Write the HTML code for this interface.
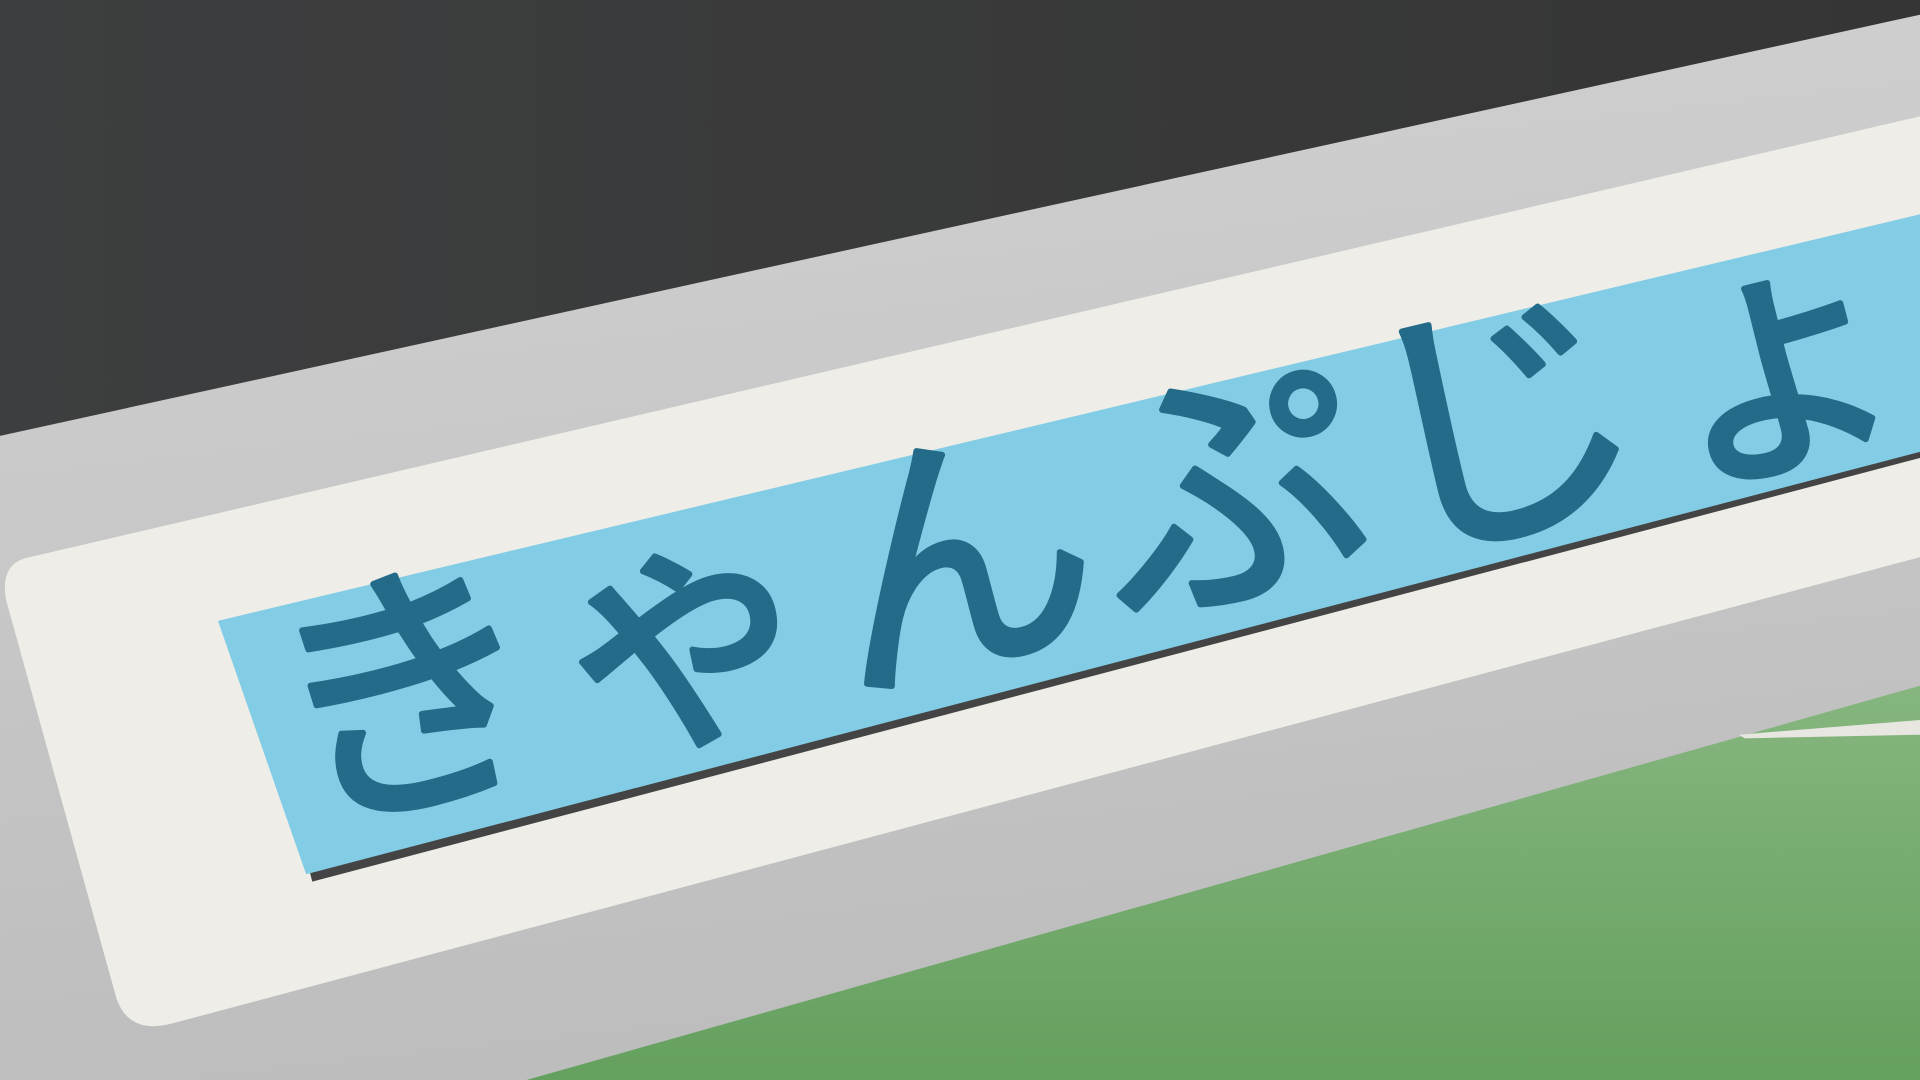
<!DOCTYPE html>
<html><head><meta charset="utf-8"><style>
html,body{margin:0;padding:0;width:1920px;height:1080px;overflow:hidden;background:#3a3a3a}
svg{display:block}
</style></head><body>
<svg width="1920" height="1080" viewBox="0 0 1568 882" preserveAspectRatio="none" xmlns="http://www.w3.org/2000/svg">
<defs>
<linearGradient id="dark" x1="0" y1="0" x2="1" y2="0"><stop offset="0" stop-color="#3d3e3f"/><stop offset="1" stop-color="#353535"/></linearGradient>
<linearGradient id="gr" x1="0" y1="0" x2="0" y2="1"><stop offset="0" stop-color="#86b67f"/><stop offset="1" stop-color="#64a05e"/></linearGradient>
<linearGradient id="bar" x1="0" y1="0" x2="0.2" y2="1"><stop offset="0" stop-color="#d2d2d2"/><stop offset="1" stop-color="#bdbdbd"/></linearGradient>
</defs>
<rect width="1568" height="882" fill="url(#dark)"/>
<polygon points="0,356 1568,12 1568,882 0,882" fill="url(#bar)"/>
<polygon points="430,882 1568,560 1568,882" fill="url(#gr)"/>
<path d="M1420,600 L1568,588 L1568,600 L1425,603 Z" fill="#e8e6e0"/>
<path d="M20,456 L1568,95 L1568,455 L140,836 Q105,845 95,815 L5,490 Q0,462 20,456 Z" fill="#efede8"/>
<polygon points="253,712 1568,368 1568,374 255,720" fill="#444"/>
<polygon points="178,507 1568,175 1568,369 250,714" fill="#82cde5"/>
<text x="245" y="672" transform="rotate(-14 245 672)" font-family="'WenQuanYi Zen Hei','Noto Sans CJK JP',sans-serif" font-size="222" letter-spacing="8" fill="#236b88" stroke="#236b88" stroke-width="5" stroke-linejoin="round" stroke-linecap="round">きゃんぷじょう</text>
</svg>
</body></html>
